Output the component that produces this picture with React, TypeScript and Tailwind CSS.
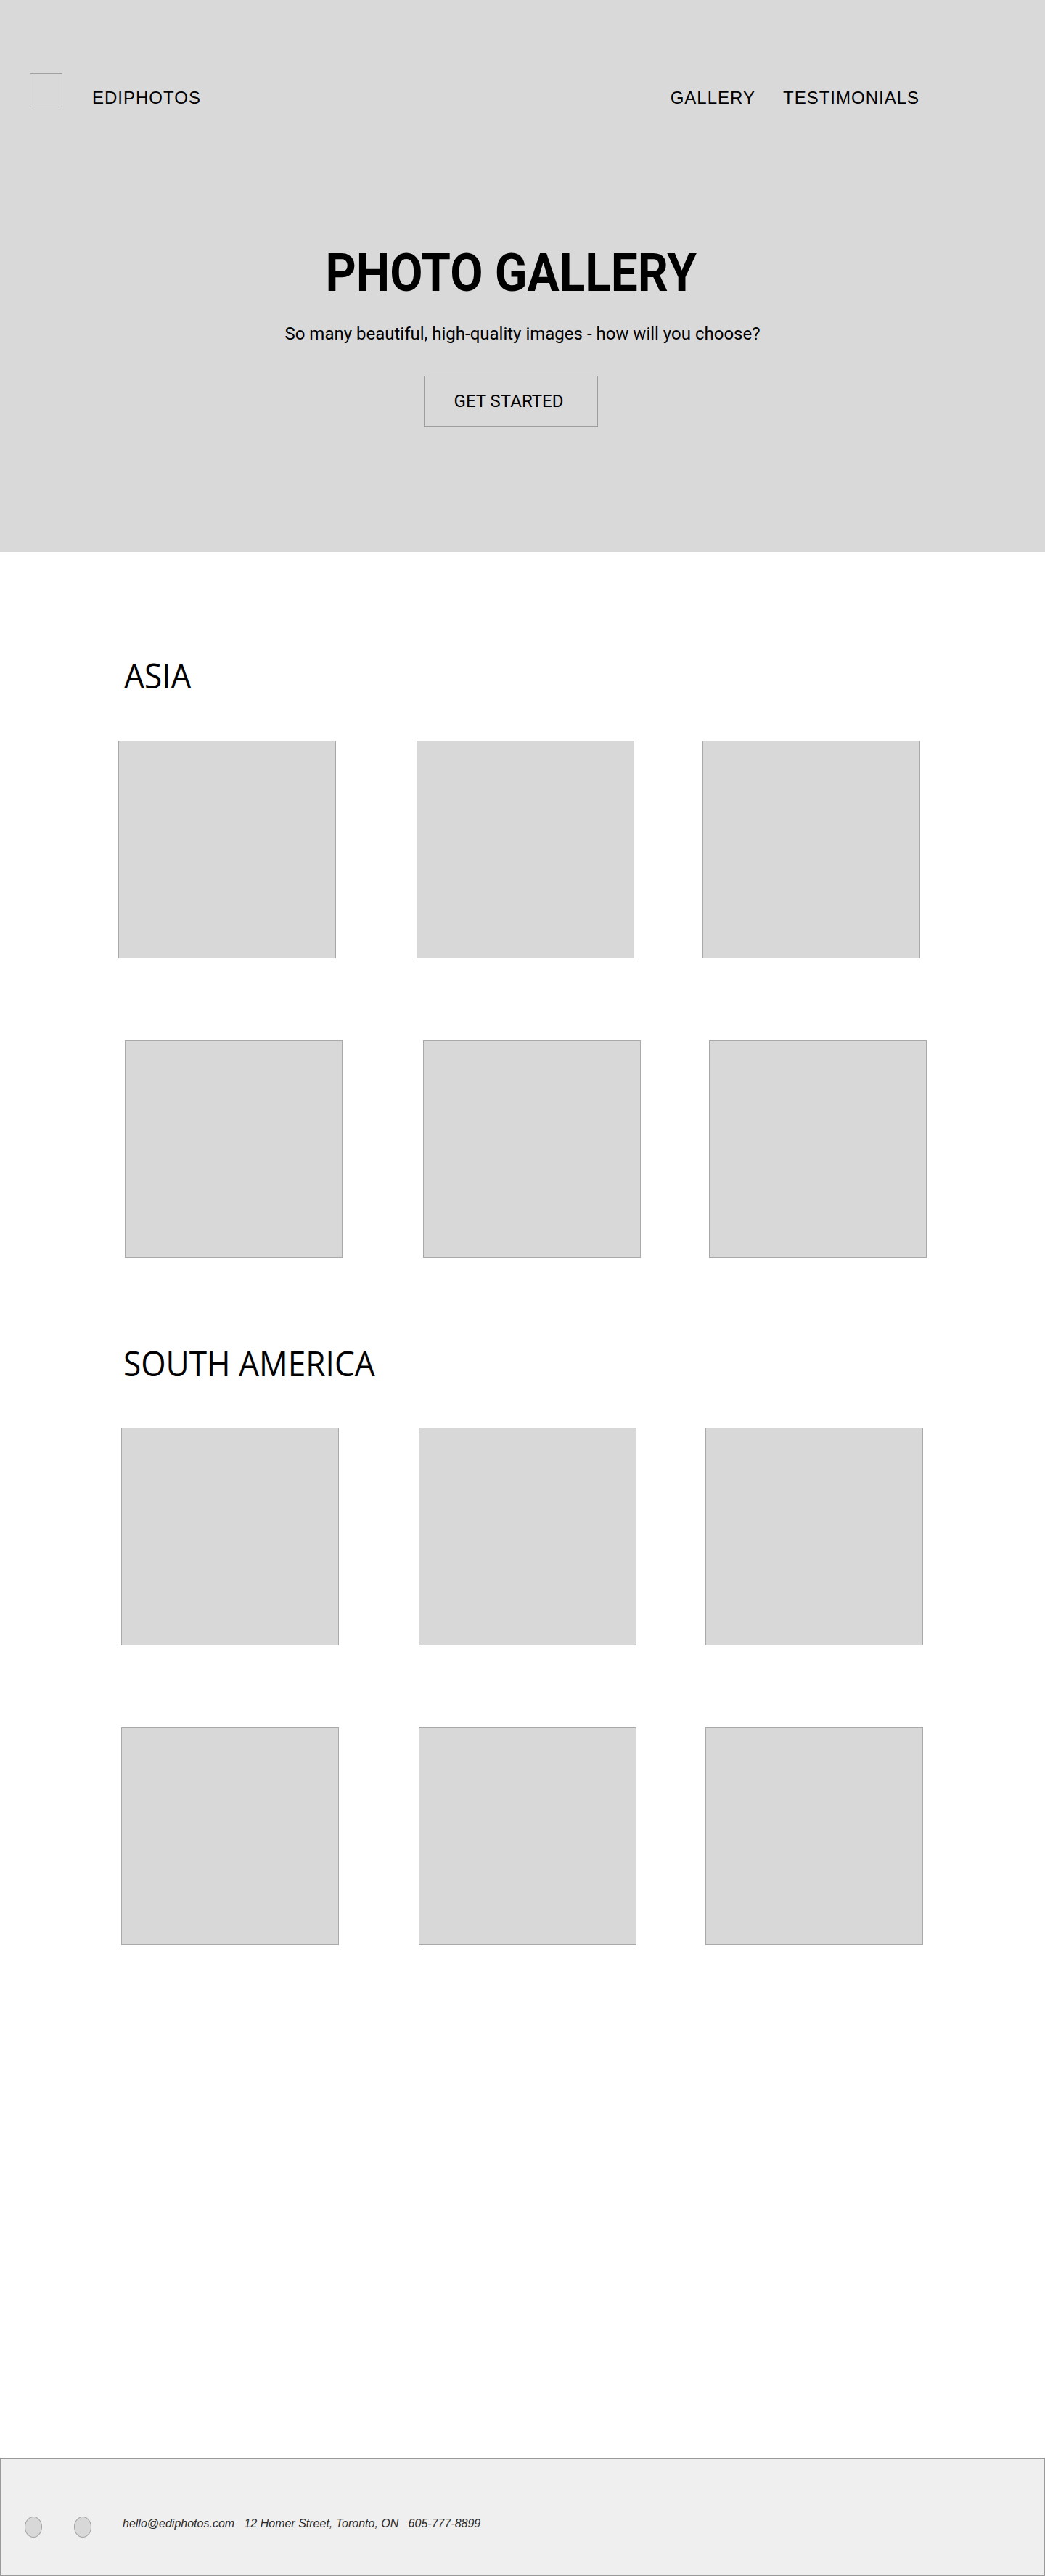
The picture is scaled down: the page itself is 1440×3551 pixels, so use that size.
import React from "react";

function Box({ className = "" }: { className?: string }) {
  return <div className={"w-[300px] h-[300px] shrink-0 bg-[#d8d8d8] border border-[#a9a9a9] " + className} />;
}

export default function App() {
  return (
    <div className="w-[1440px] bg-white text-black">
      {/* HERO */}
      <section className="h-[761px] bg-[#d9d9d9] flex flex-col">
        <header className="flex items-start pt-[101px] pl-[41px] pr-[173px]">
          <div className="w-[45px] h-[47px] border border-[#a0a0a0]" />
          <div
            className="ml-[41px] mt-[22px] text-[24px] leading-none tracking-[1px] text-black"
            style={{ fontFamily: '"Liberation Sans", Arial, sans-serif' }}
          >
            EDIPHOTOS
          </div>
          <nav
            className="ml-auto mt-[22px] flex gap-[38px] text-[24px] leading-none tracking-[1px] text-black"
            style={{ fontFamily: '"Liberation Sans", Arial, sans-serif' }}
          >
            <span>GALLERY</span>
            <span>TESTIMONIALS</span>
          </nav>
        </header>
        <div className="flex flex-col items-center">
          <div className="mt-[192px] pr-[32px]">
            <h1
              className="inline-block scale-x-[0.9] text-[73px] leading-none font-bold whitespace-nowrap"
              style={{ fontFamily: 'Roboto, "Liberation Sans", sans-serif' }}
            >
              PHOTO GALLERY
            </h1>
          </div>
          <p
            className="mt-[35px] text-[24px] leading-none"
            style={{ fontFamily: 'Roboto, "Liberation Sans", sans-serif' }}
          >
            So many beautiful, high-quality images - how will you choose?
          </p>
          <div className="mt-[46px] mr-[32px] w-[240px] h-[70px] border border-[#9d9d9d] flex items-center justify-center">
            <span
              className="text-[24px] leading-none pr-[6px]"
              style={{ fontFamily: 'Roboto, "Liberation Sans", sans-serif' }}
            >
              GET STARTED
            </span>
          </div>
        </div>
      </section>

      {/* ASIA */}
      <section className="flex flex-col">
        <h2
          className="mt-[146px] ml-[171px] text-[48px] leading-none origin-left scale-x-[0.92]"
          style={{ fontFamily: '"Open Sans", "Noto Sans", sans-serif' }}
        >
          ASIA
        </h2>
        <div className="mt-[66px] flex pl-[163px]">
          <Box />
          <Box className="ml-[111px]" />
          <Box className="ml-[94px]" />
        </div>
        <div className="mt-[113px] flex pl-[172px]">
          <Box />
          <Box className="ml-[111px]" />
          <Box className="ml-[94px]" />
        </div>
      </section>

      {/* SOUTH AMERICA */}
      <section className="flex flex-col">
        <h2
          className="mt-[121px] ml-[170px] text-[48px] leading-none origin-left scale-x-[0.92]"
          style={{ fontFamily: '"Open Sans", "Noto Sans", sans-serif' }}
        >
          SOUTH AMERICA
        </h2>
        <div className="mt-[65px] flex pl-[167px]">
          <Box />
          <Box className="ml-[110px]" />
          <Box className="ml-[95px]" />
        </div>
        <div className="mt-[113px] flex pl-[167px]">
          <Box />
          <Box className="ml-[110px]" />
          <Box className="ml-[95px]" />
        </div>
      </section>

      {/* FOOTER */}
      <footer className="mt-[708px] h-[162px] bg-[#efefef] border border-[#9a9a9a] flex items-start pt-[79px] pl-[33px]">
        <div className="w-[24px] h-[29px] rounded-[50%] bg-[#d8d8d8] border border-[#a3a3a3]" />
        <div className="ml-[44px] w-[24px] h-[29px] rounded-[50%] bg-[#d8d8d8] border border-[#a3a3a3]" />
        <div
          className="ml-[43px] mt-[2px] text-[16px] leading-none italic text-[#2a2a2a] whitespace-pre"
          style={{ fontFamily: '"Liberation Sans", Arial, sans-serif' }}
        >
          {"hello@ediphotos.com   12 Homer Street, Toronto, ON   605-777-8899"}
        </div>
      </footer>
    </div>
  );
}
